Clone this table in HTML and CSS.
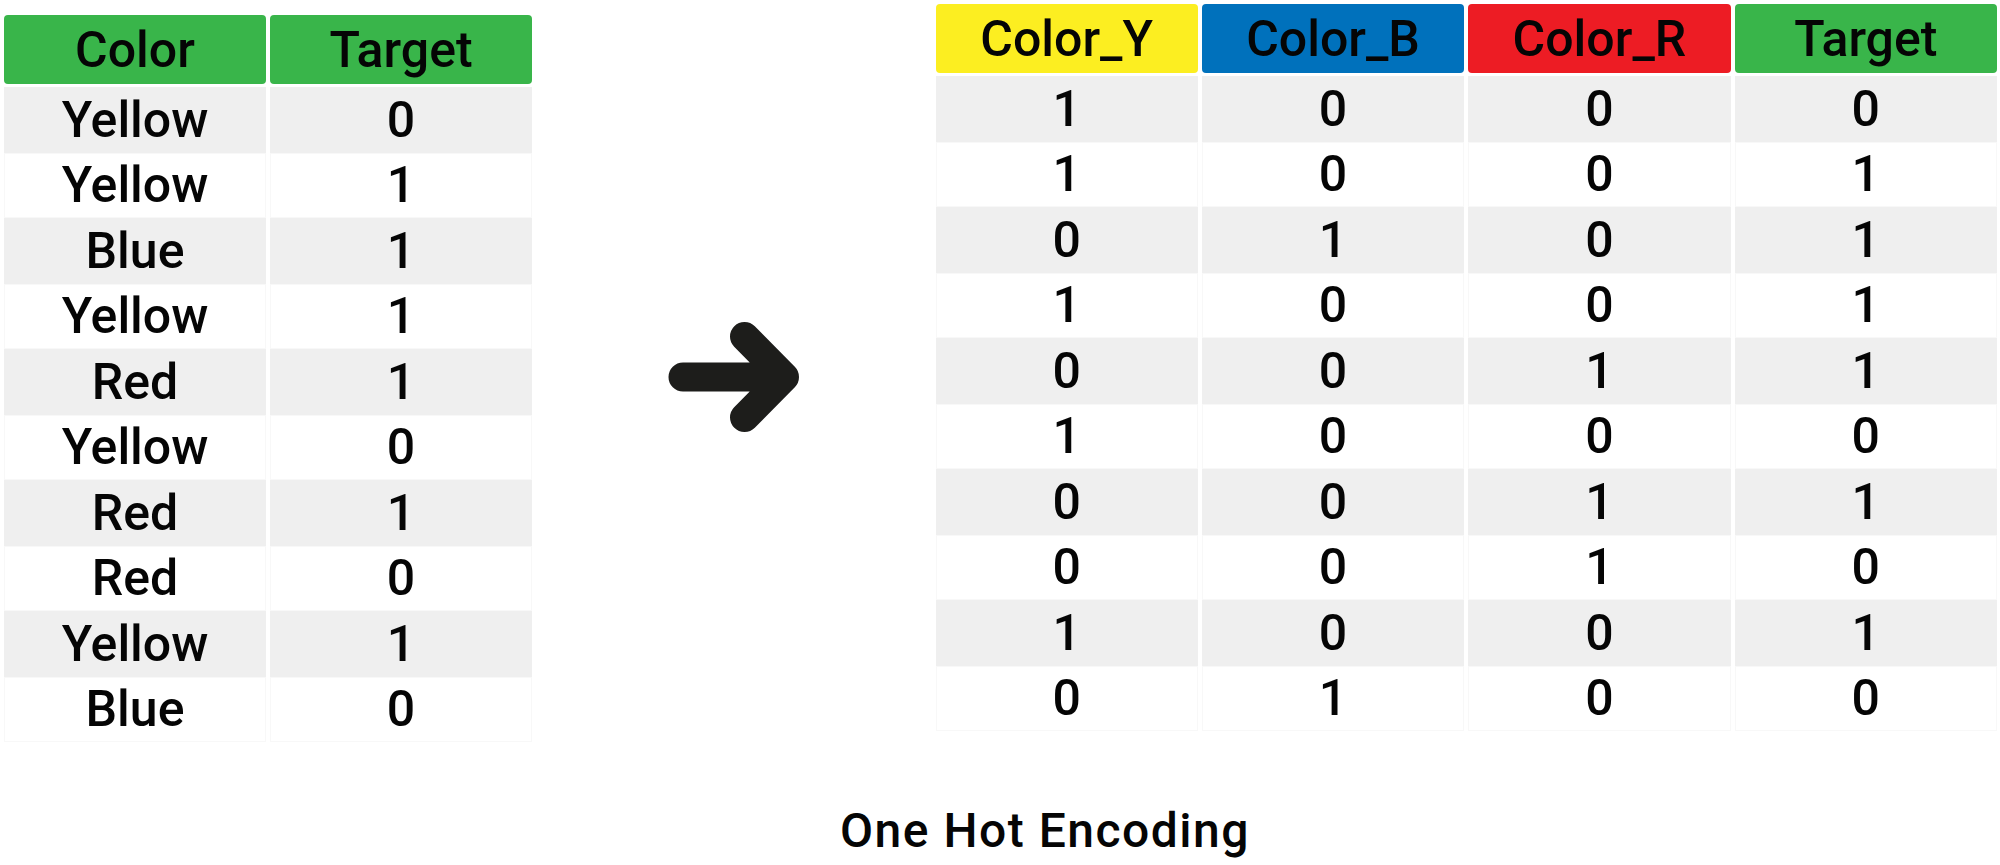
FILE: index.html
```html
<!DOCTYPE html>
<html lang="en">
<head>
<meta charset="utf-8">
<title>One Hot Encoding</title>
<link rel="stylesheet" href="styles.css">
</head>
<body>
<div class="stage">
  <div class="tables">
    <div class="table table-left">
      <div class="row head">
        <div class="cell h-green">Color</div>
        <div class="cell h-green">Target</div>
      </div>
      <div class="row shade"><div class="cell">Yellow</div><div class="cell">0</div></div>
      <div class="row"><div class="cell">Yellow</div><div class="cell">1</div></div>
      <div class="row shade"><div class="cell">Blue</div><div class="cell">1</div></div>
      <div class="row"><div class="cell">Yellow</div><div class="cell">1</div></div>
      <div class="row shade"><div class="cell">Red</div><div class="cell">1</div></div>
      <div class="row"><div class="cell">Yellow</div><div class="cell">0</div></div>
      <div class="row shade"><div class="cell">Red</div><div class="cell">1</div></div>
      <div class="row"><div class="cell">Red</div><div class="cell">0</div></div>
      <div class="row shade"><div class="cell">Yellow</div><div class="cell">1</div></div>
      <div class="row"><div class="cell">Blue</div><div class="cell">0</div></div>
    </div>

    <div class="middle">
      <svg class="arrow" width="140" height="120" viewBox="0 0 140 120" aria-hidden="true">
        <path d="M19 60 H120.5 M80.5 19.5 L120.5 60 L80.5 100.5" fill="none" stroke="#1d1d1b" stroke-width="29" stroke-linecap="round" stroke-linejoin="round"/>
      </svg>
    </div>

    <div class="table table-right">
      <div class="row head">
        <div class="cell h-yellow">Color_Y</div>
        <div class="cell h-blue">Color_B</div>
        <div class="cell h-red">Color_R</div>
        <div class="cell h-green">Target</div>
      </div>
      <div class="row shade"><div class="cell">1</div><div class="cell">0</div><div class="cell">0</div><div class="cell">0</div></div>
      <div class="row"><div class="cell">1</div><div class="cell">0</div><div class="cell">0</div><div class="cell">1</div></div>
      <div class="row shade"><div class="cell">0</div><div class="cell">1</div><div class="cell">0</div><div class="cell">1</div></div>
      <div class="row"><div class="cell">1</div><div class="cell">0</div><div class="cell">0</div><div class="cell">1</div></div>
      <div class="row shade"><div class="cell">0</div><div class="cell">0</div><div class="cell">1</div><div class="cell">1</div></div>
      <div class="row"><div class="cell">1</div><div class="cell">0</div><div class="cell">0</div><div class="cell">0</div></div>
      <div class="row shade"><div class="cell">0</div><div class="cell">0</div><div class="cell">1</div><div class="cell">1</div></div>
      <div class="row"><div class="cell">0</div><div class="cell">0</div><div class="cell">1</div><div class="cell">0</div></div>
      <div class="row shade"><div class="cell">1</div><div class="cell">0</div><div class="cell">0</div><div class="cell">1</div></div>
      <div class="row"><div class="cell">0</div><div class="cell">1</div><div class="cell">0</div><div class="cell">0</div></div>
    </div>
  </div>

  <div class="caption">One Hot Encoding</div>
</div>
</body>
</html>
```

FILE: styles.css
```css
html, body {
  margin: 0;
  padding: 0;
  background: #ffffff;
}

body {
  width: 2000px;
  height: 865px;
  overflow: hidden;
  font-family: Roboto, "Noto Sans", "Liberation Sans", sans-serif;
  font-weight: 500;
  color: #050505;
}

.tables {
  display: flex;
  align-items: flex-start;
  padding-left: 4px;
  padding-right: 3px;
}

.table {
  display: flex;
  flex-direction: column;
}

.table-left {
  margin-top: 15px;
  width: 528px;
}

.table-right {
  margin-top: 4px;
  width: 1061.5px;
}

.row {
  display: grid;
  grid-auto-flow: column;
  grid-auto-columns: 1fr;
  column-gap: 4px;
  height: 65.5px;
}

.row.head {
  height: 69px;
  margin-bottom: 3px;
}

.cell {
  display: flex;
  align-items: center;
  justify-content: center;
  font-size: 50px;
  line-height: 1;
  box-shadow: inset 0 0 0 1px #f8f8f8;
}

.row.shade .cell {
  background: #efefef;
  box-shadow: none;
}

.head .cell {
  border-radius: 4px;
  box-shadow: none;
}

.h-green { background: #39b54a; }
.h-yellow { background: #fcee21; }
.h-blue { background: #0071bc; }
.h-red { background: #ed1c24; }

.middle {
  flex: 1;
  display: flex;
  justify-content: center;
  padding-top: 317px;
}

.arrow {
  display: block;
}

.caption {
  margin-top: 64.6px;
  padding-left: 90px;
  text-align: center;
  font-size: 48px;
  line-height: 1;
  letter-spacing: 1.5px;
}
```
